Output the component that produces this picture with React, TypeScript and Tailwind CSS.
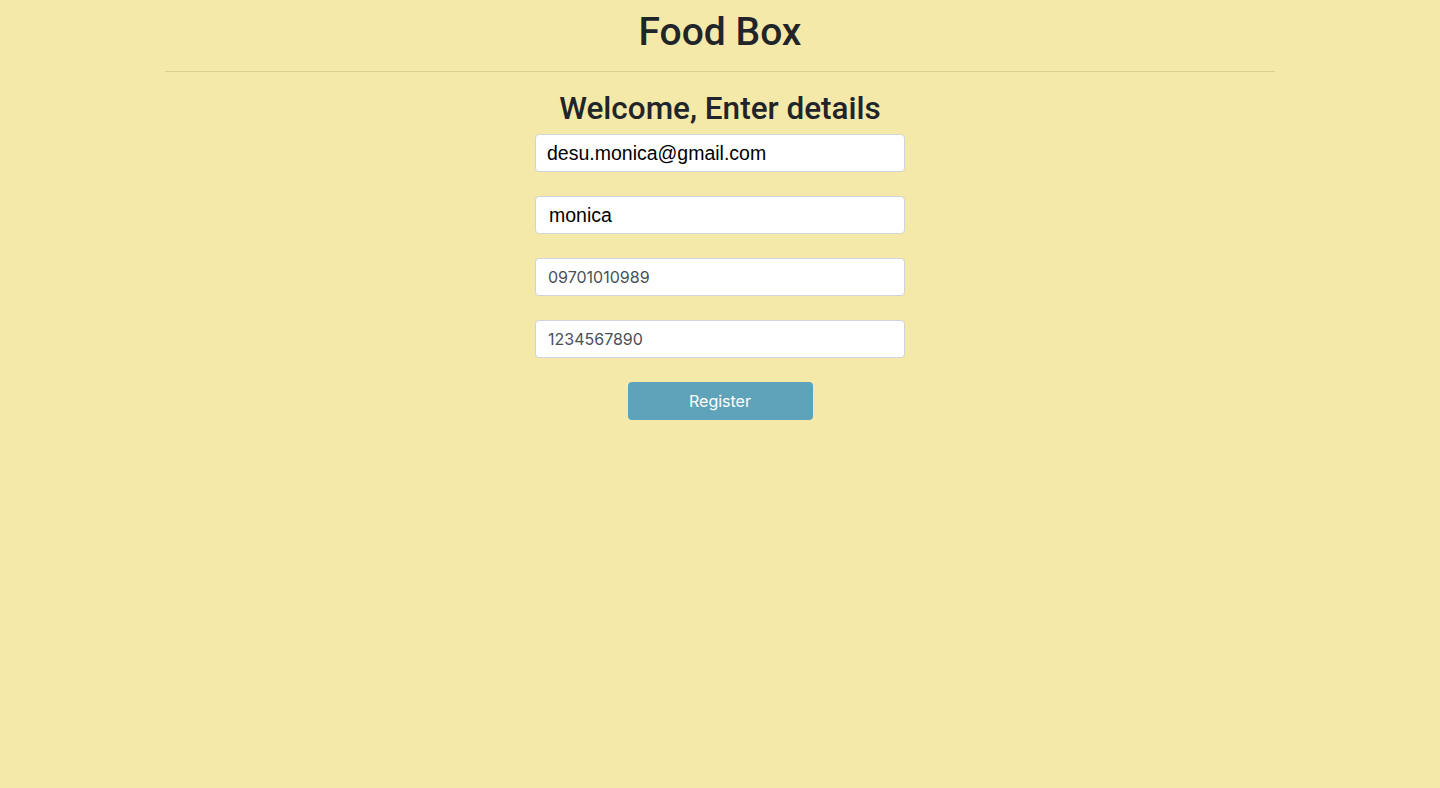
import React from "react";

export default function App() {
  return (
    <div className="min-h-[788px] bg-[#f5e9a9] font-['Inter',sans-serif] text-[#212529]">
      <div className="mx-auto w-[1110px]">
        <h1 className="pt-2 text-center font-['Roboto',sans-serif] text-[39px] font-medium leading-[48px]">Food Box</h1>
        <hr className="mt-[15px] border-t border-[#d9cf94]" />
        <h2 className="mt-[18px] text-center font-['Roboto',sans-serif] text-[31.5px] font-medium leading-[38px]">
          Welcome, Enter details
        </h2>
        <form className="mx-auto mt-[6px] flex w-[370px] flex-col gap-6">
          <input
            defaultValue="desu.monica@gmail.com"
            className="h-[38px] w-full rounded border border-[#ced4da] bg-white px-[11px] font-['Liberation_Sans',sans-serif] text-[19.5px] text-black outline-none"
          />
          <input
            defaultValue="monica"
            className="h-[38px] w-full rounded border border-[#ced4da] bg-white px-[13px] font-['Liberation_Sans',sans-serif] text-[19.5px] text-black outline-none"
          />
          <input
            defaultValue="09701010989"
            className="h-[38px] w-full rounded border border-[#ced4da] bg-white px-3 text-base text-[#495057] outline-none"
          />
          <input
            defaultValue="1234567890"
            className="h-[38px] w-full rounded border border-[#ced4da] bg-white px-3 text-base text-[#495057] outline-none"
          />
          <button
            type="button"
            className="mx-auto h-[38px] w-[185px] rounded bg-[#5fa3ba] text-base text-white"
          >
            Register
          </button>
        </form>
      </div>
    </div>
  );
}
